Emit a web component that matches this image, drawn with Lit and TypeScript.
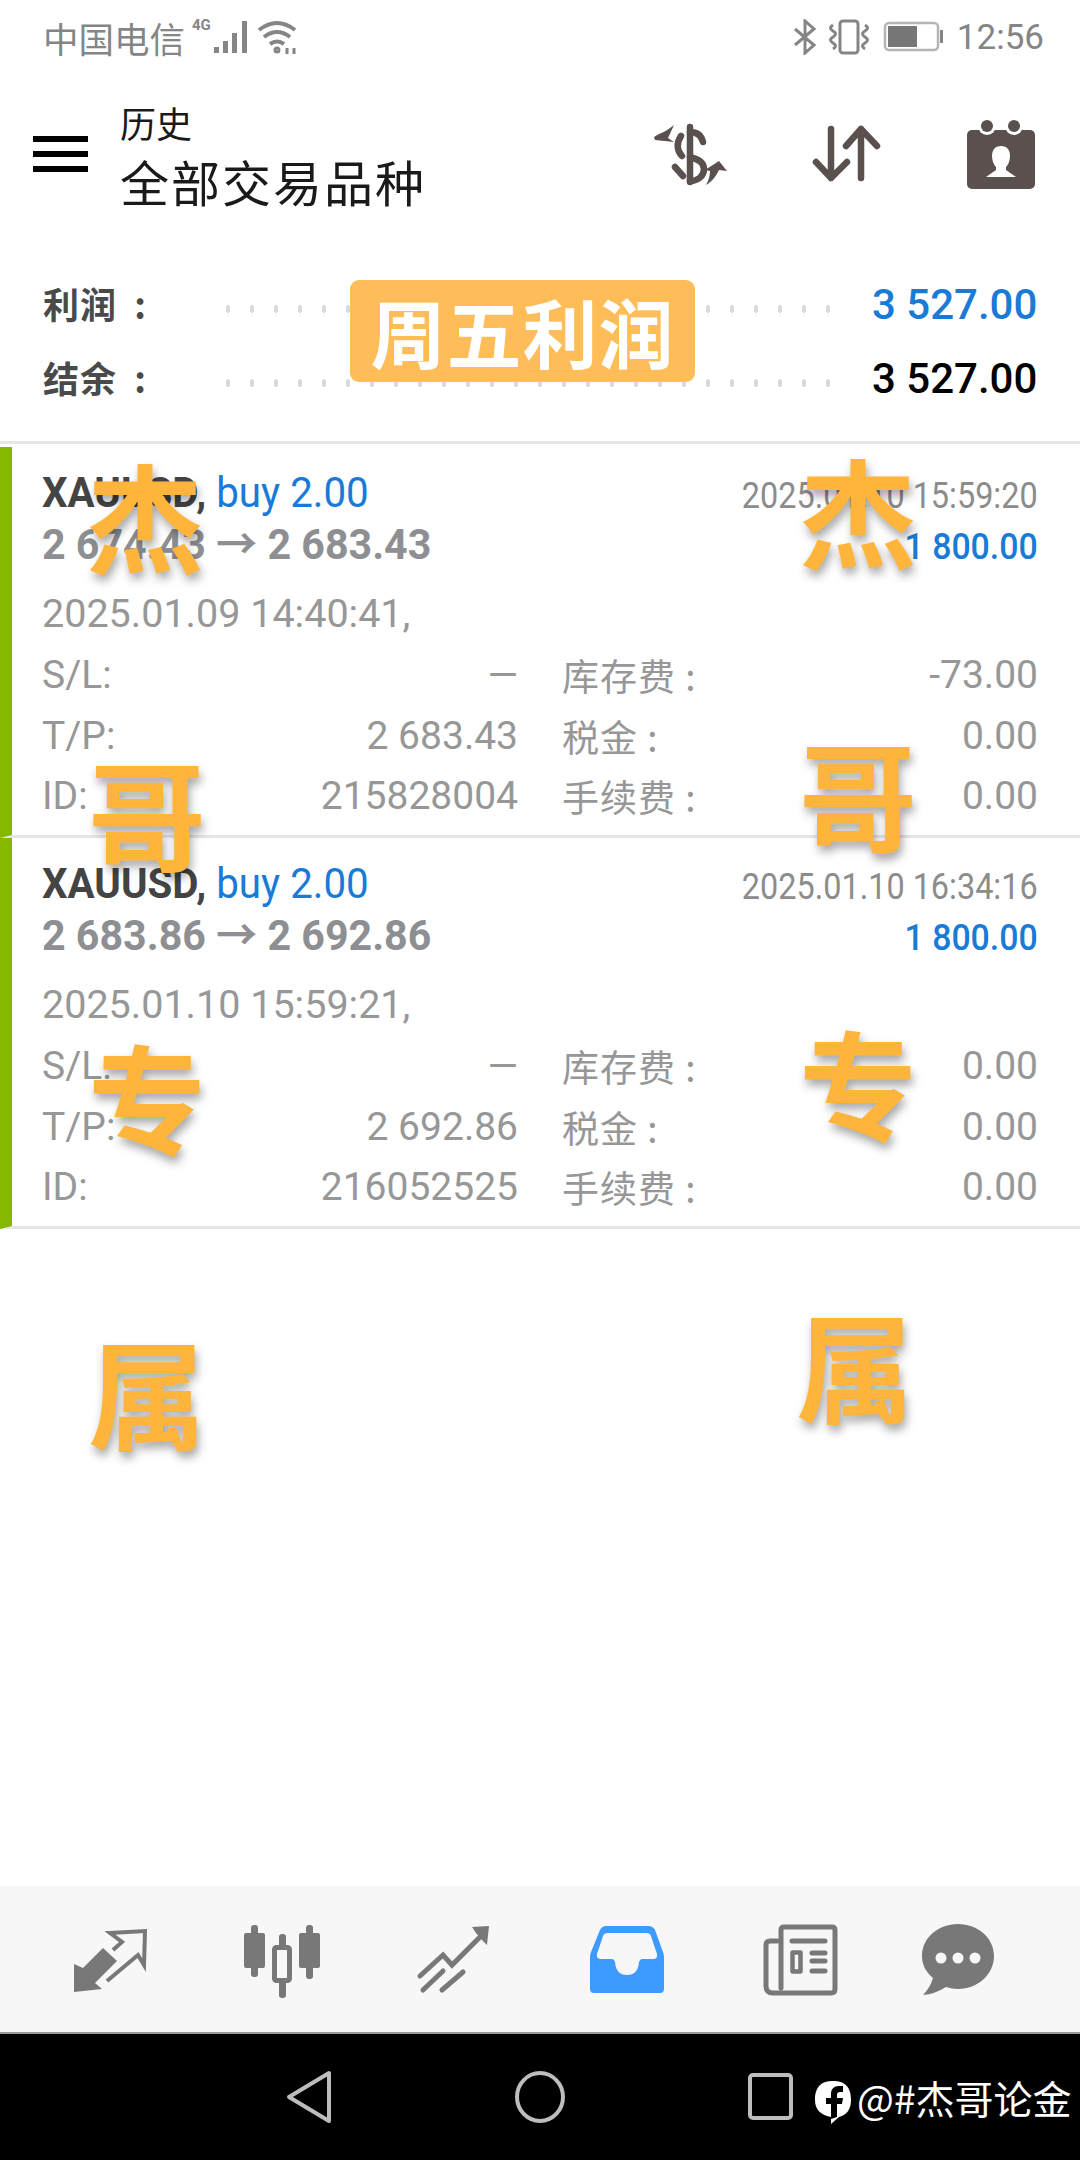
import { LitElement, html, css, svg } from "lit";
import { customElement } from "lit/decorators.js";

const tabs = [
  { c: 103, i: svg`<path fill="#787878" d="M74 1961l9 4 20-20 14 13-22 22 7 6-28 3z"/><path fill="none" stroke="#787878" stroke-width="4" d="M107 1978l31-26 6 10 1-34-35 2 12 9-9 8"/>` },
  { c: 282, i: svg`<g fill="#787878"><rect x="244" y="1930" width="21" height="35" rx="2"/><rect x="251" y="1922" width="7" height="52" rx="3"/><rect x="299" y="1930" width="21" height="35" rx="2"/><rect x="306" y="1922" width="7" height="54" rx="3"/><rect x="279" y="1931" width="7" height="64" rx="3"/></g><rect x="274.500" y="1944.500" width="15" height="33" rx="2" fill="#f7f7f7" stroke="#787878" stroke-width="5"/>` },
  { c: 453, i: svg`<g fill="none" stroke="#787878" stroke-width="5" stroke-linecap="round"><path d="M420 1973l23-21 9 10 30-30"/><path d="M423 1987l20-19M442 1987l21-18"/></g><path fill="#787878" d="M472 1924l17-1-2 19-5-5-6-7z"/>` },
  { c: 626, on: true, i: svg`<path fill="#3d9bff" fill-rule="evenodd" d="M606 1923h42q5 0 7 4l8 22q1 2 1 5v32q0 4-4 4h-66q-4 0-4-4v-32q0-3 1-5l9-22q2-4 6-4zM608 1930q-4 0-5 3l-6 18q-1 5 4 5h11q2 0 3 3 1 13 12 13t12-13q1-3 3-3h11q5 0 4-5l-6-18q-1-3-5-3z"/>` },
  { c: 800, i: svg`<g fill="none" stroke="#787878" stroke-width="5" stroke-linejoin="round" stroke-linecap="round"><path d="M781 1985v-58q0-3 3-3h48q3 0 3 3v59q0 4-4 4h-58q-7 0-7-7v-41q0-4 4-4h7"/><path d="M792 1938h33M812 1950h13M812 1958h13M812 1968h13"/><rect x="792.500" y="1949.500" width="8" height="19" stroke-width="4.500"/></g>` },
  { c: 958, i: svg`<path fill="#787878" d="M958 1921c20 0 36 14 36 32s-16 33-36 33q-6 0-12-2-11 7-23 8 7-7 10-17c-7-6-11-13-11-22 0-18 16-32 36-32z"/><g fill="#f7f7f7"><circle cx="941" cy="1955" r="5.500"/><circle cx="958" cy="1955" r="5.500"/><circle cx="975" cy="1955" r="5.500"/></g>` },
];

const orders = [
  { open: "2 674.43", close: "2 683.43", end: "2025.01.10 15:59:20", profit: "1 800.00", start: "2025.01.09 14:40:41,", swap: "-73.00", id: "215828004" },
  { open: "2 683.86", close: "2 692.86", end: "2025.01.10 16:34:16", profit: "1 800.00", start: "2025.01.10 15:59:21,", swap: "0.00", id: "216052525" },
];

const marks = [
  { t: "杰", x: 86, y: 449 }, { t: "哥", x: 88, y: 746 }, { t: "专", x: 88, y: 1030 }, { t: "属", x: 88, y: 1325 },
  { t: "杰", x: 799, y: 444 }, { t: "哥", x: 799, y: 727 }, { t: "专", x: 799, y: 1016 }, { t: "属", x: 796, y: 1298 },
];

@customElement("app-root")
export class AppRoot extends LitElement {
  static styles = css`
    :host { display: block; position: relative; width: 1080px; height: 2160px; overflow: hidden; background: #fff; font-family: Roboto, "Noto Sans CJK SC", sans-serif; }
    .page { display: flex; flex-direction: column; height: 2160px; }
    svg { display: block; flex: none; }
    .status { display: flex; align-items: center; height: 74px; padding: 0 36px 0 43px; color: #858585; font-size: 31px; }
    .carrier { font-family: "Noto Sans CJK SC", sans-serif; font-size: 35.500px; width: 147px; white-space: nowrap; }
    .time { font-size: 35px; margin-left: 14px; }
    .grow { flex: 1; }
    .header { display: flex; align-items: center; height: 160px; padding: 0 44px 0 33px; }
    .burger { display: flex; flex-direction: column; gap: 9px; width: 55px; margin-right: 32px; }
    .burger i { display: block; height: 6px; background: #000; }
    .titles { font-family: "Noto Sans CJK SC", sans-serif; color: #1a1a1a; margin-top: 2px; }
    .t1 { font-size: 36px; line-height: 52px; }
    .t2 { font-size: 49px; line-height: 66px; letter-spacing: 2px; }
    .summary { padding-top: 32px; height: 210px; box-sizing: border-box; border-bottom: 3px solid #e6e6e6; display: flex; flex-direction: column; }
    .sumrow { display: flex; align-items: center; height: 74px; padding: 0 43px; }
    .sumlabel { font-family: "Noto Sans CJK SC", sans-serif; font-weight: 700; font-size: 36px; letter-spacing: 1px; word-spacing: 8px; color: #4a4a4a; width: 173px; white-space: nowrap; }
    .dots { flex: 1; height: 10px; margin-top: 12px; background-image: radial-gradient(ellipse 2.500px 4px, #dadada 90%, transparent 100%); background-size: 24px 10px; background-repeat: repeat-x; margin-right: 36px; }
    .sumval { font-size: 42px; font-weight: 500; width: 165px; text-align: right; white-space: nowrap; margin-top: 2px; }
    .blue { color: #1a7bd6; }
    .black { color: #000; }
    .card { height: 391px; box-sizing: border-box; border-left: 12px solid #86b800; border-bottom: 3px solid #e6e6e6; padding: 20px 42px 0 30px; margin-top: 3px; }
    .card + .card { margin-top: 0; }
    .line { display: flex; justify-content: space-between; white-space: nowrap; }
    .l1 { height: 50px; align-items: center; }
    .sym { font-size: 42px; font-weight: 700; color: #444; transform: scaleX(.96); transform-origin: left center; }
    .buy { font-weight: 400; color: #1a7bd6; }
    .end { font-size: 36px; color: #8c8c8c; margin-top: 8px; transform: scaleX(.9); transform-origin: right center; }
    .l2 { height: 46px; align-items: center; }
    .prices { font-size: 42px; font-weight: 700; color: #8e8f92; transform: scaleX(.98); transform-origin: left center; }
    .profit { font-size: 36px; font-weight: 500; color: #1a7bd6; margin-top: 14px; transform: scaleX(.94); transform-origin: right center; }
    .start { font-size: 39.500px; color: #979797; margin-top: 26px; line-height: 50px; }
    .grid { display: grid; grid-template-columns: 476px 1fr; column-gap: 44px; margin-top: 6px; }
    .cell { display: flex; justify-content: space-between; height: 60.500px; align-items: center; color: #979797; font-size: 39px; white-space: nowrap; }
    .cjk { font-family: "Noto Sans CJK SC", sans-serif; font-size: 37px; letter-spacing: 1px; }
    .tabs { display: grid; grid-template-columns: 190px 168px 174px 172px 176px 140px; padding-left: 8px; height: 146px; align-items: center; background: #f7f7f7; margin-top: auto; border-bottom: 2px solid #999; box-sizing: content-box; }
    .tab { display: flex; justify-content: center; }
    .nav { display: flex; align-items: center; height: 126px; background: #000; padding: 0 10px 0 286px; color: #fff; }
    .gap-home { margin-left: 180px; }
    .gap-rect { margin-left: 181px; }
    .brand { display: flex; align-items: center; margin-left: 19px; gap: 5px; font-family: "Noto Sans CJK SC", sans-serif; font-size: 39px; white-space: nowrap; }
    .fb { margin-top: 10px; }
    .gap-4 { margin-left: 5px; }
    .gap-8 { margin-left: 8px; }
    .gap-15 { margin-left: 12px; }
    .gap-sort { margin-left: 82px; }
    .gap-cal { margin-left: 85px; }
    .badge { position: absolute; left: 350px; top: 280px; width: 345px; height: 102px; border-radius: 9px; background: #ffbd59; color: #fff; font-family: "Noto Sans CJK SC", sans-serif; font-weight: 700; font-size: 75px; line-height: 102px; text-align: center; letter-spacing: 1px; }
    .mark { position: absolute; font-family: "Noto Sans CJK SC", sans-serif; font-weight: 700; font-size: 118px; line-height: 130px; color: #ffb43c; text-shadow: 2px 6px 10px rgba(0,0,0,.35); }
  `;

  private card(o: (typeof orders)[number]) {
    return html`<div class="card">
      <div class="line l1"><span class="sym">XAUUSD, <span class="buy">buy 2.00</span></span><span class="end">${o.end}</span></div>
      <div class="line l2"><span class="prices">${o.open} → ${o.close}</span><span class="profit">${o.profit}</span></div>
      <div class="start">${o.start}</div>
      <div class="grid">
        <div class="cell"><span>S/L:</span><span>—</span></div><div class="cell"><span class="cjk">库存费 :</span><span>${o.swap}</span></div>
        <div class="cell"><span>T/P:</span><span>${o.close}</span></div><div class="cell"><span class="cjk">税金 :</span><span>0.00</span></div>
        <div class="cell"><span>ID:</span><span>${o.id}</span></div><div class="cell"><span class="cjk">手续费 :</span><span>0.00</span></div>
      </div>
    </div>`;
  }

  render() {
    return html`<div class="page">
      <div class="status">
        <span class="carrier">中国电信</span>
        <svg width="62" height="40" viewBox="188 17 62 40">
          <text x="190" y="30" font-size="15" font-weight="700" fill="#858585" font-family="Roboto">4G</text>
          <g fill="#858585"><rect x="212" y="47" width="5" height="6"/><rect x="221" y="41" width="5" height="12"/><rect x="230" y="33" width="5" height="20"/><rect x="240" y="21" width="5" height="32"/></g>
        </svg>
        <svg class="gap-4" width="42" height="36" viewBox="254 19 42 36" fill="none" stroke="#858585" stroke-width="4">
          <path d="M256 30q18-14 36 0M261 37q13-10 26 0M267 44q7-5 14 0"/><circle cx="274" cy="50" r="1.500"/><path d="M284 48v6M291 48v6" stroke-width="3"/>
        </svg>
        <span class="grow"></span>
        <svg width="25" height="36" viewBox="792 20 25 36" fill="none" stroke="#858585" stroke-width="3"><path d="M795 30l19 16-9 8V22l9 8-19 16"/></svg>
        <svg class="gap-8" width="46" height="36" viewBox="824 20 46 36" fill="none" stroke="#858585" stroke-width="3"><rect x="839" y="22" width="18" height="32" rx="3"/><path d="M832 26q-5 3 0 6t0 6 0 6 0 6M864 26q5 3 0 6t0 6 0 6 0 6"/></svg>
        <svg class="gap-15" width="60" height="32" viewBox="884 22 60 32"><rect x="886" y="24" width="53" height="27" rx="4" fill="none" stroke="#b5b5b5" stroke-width="2.500"/><rect x="889" y="27" width="29" height="21" fill="#777"/><rect x="941" y="31" width="3" height="13" fill="#858585"/></svg>
        <span class="time">12:56</span>
      </div>

      <div class="header">
        <div class="burger"><i></i><i></i><i></i></div>
        <div class="titles"><div class="t1">历史</div><div class="t2">全部交易品种</div></div>
        <span class="grow"></span>
        <svg width="76" height="70" viewBox="653 120 76 70" fill="none" stroke="#5a504e" stroke-width="6.500" stroke-linecap="round">
          <path d="M690 128v55"/><path d="M703 143c-2-8-7-10-13-10"/><path d="M681 137c-5 7-4 15 1 20"/><path d="M690 158c8 2 14 6 14 12 0 7-6 12-14 12"/><path d="M675 168l8 9"/>
          <path fill="#5a504e" stroke="none" d="M674 126l-6 13 6 4-19-2-1-3 5-3c6-2 10-5 15-9zM727 172l-8-1c-3 6-6 11-13 15 3-5 4-10 4-14l-5-1 14-9z"/>
        </svg>
        <svg class="gap-sort" width="70" height="64" viewBox="811 124 70 64" fill="none" stroke="#5a504e" stroke-width="6.500" stroke-linecap="round" stroke-linejoin="round">
          <path d="M831 131v49M816 164l15 16 16-16"/><path d="M861 180v-49M846 148l15-17 16 17"/>
        </svg>
        <svg class="gap-cal" width="70" height="72" viewBox="966 117 70 72">
          <rect x="967" y="129" width="68" height="59" rx="5" fill="#5a504e"/><circle cx="987" cy="125" r="9" fill="#fff"/><circle cx="1014" cy="125" r="9" fill="#fff"/><circle cx="987" cy="125" r="6" fill="#5a504e"/><circle cx="1014" cy="125" r="6" fill="#5a504e"/>
          <path fill="#fff" d="M1001 145c6 0 9 4 9 10 0 5-2 9-4 11v3l10 7H986l10-7v-3c-2-2-4-6-4-11 0-6 3-10 9-10z"/>
        </svg>
      </div>

      <div class="summary">
        <div class="sumrow"><span class="sumlabel">利润 :</span><span class="dots"></span><span class="sumval blue">3 527.00</span></div>
        <div class="sumrow"><span class="sumlabel">结余 :</span><span class="dots"></span><span class="sumval black">3 527.00</span></div>
      </div>

      ${orders.map((o) => this.card(o))}

      <div class="tabs">
        ${tabs.map((t) => html`<div class="tab"><svg width="90" height="90" viewBox="${t.c - 45} 1911 90 90">${t.i}</svg></div>`)}
      </div>

      <div class="nav">
        <svg width="48" height="56" viewBox="286 2067 48 56" fill="none" stroke="#bdbdbd" stroke-width="4" stroke-linejoin="round"><path d="M329 2071v48l-40-24z"/></svg>
        <svg class="gap-home" width="52" height="56" viewBox="514 2067 52 56" fill="none" stroke="#bdbdbd" stroke-width="4"><ellipse cx="540" cy="2095" rx="23" ry="24"/></svg>
        <svg class="gap-rect" width="48" height="56" viewBox="745 2067 48 56" fill="none" stroke="#bdbdbd" stroke-width="4"><rect x="748" y="2073" width="41" height="43" rx="3"/></svg>
        <span class="brand">
          <svg class="fb" width="38" height="46" viewBox="0 0 38 46"><path fill="#fff" d="M19 2c11 0 18 5 18 19 0 9-4 15-12 17l-8 7 0-7C6 36 1 30 1 21 1 7 8 2 19 2z"/><path fill="#000" d="M17 40V25h-5v-6h5v-4c0-5 3-8 8-8h4v6h-3c-2 0-3 1-3 3v3h6l-1 6h-5v13z"/></svg>
          <span>@#杰哥论金</span>
        </span>
      </div>
    </div>

    <div class="badge">周五利润</div>
    ${marks.map((m) => html`<div class="mark" style="left:${m.x}px;top:${m.y}px">${m.t}</div>`)}`;
  }
}
